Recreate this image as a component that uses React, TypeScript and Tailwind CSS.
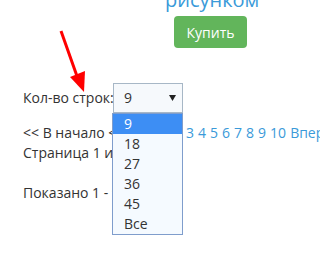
export default function App(): React.ReactElement {
	const options = ["9", "18", "27", "36", "45", "Все"]
	const pages = ["3", "4", "5", "6", "7", "8", "9", "10", "Вперёд", ">"]
	return (
		// Page crop
		<div className="relative w-[320px] h-[262px] overflow-hidden bg-white font-['Open_Sans',sans-serif] text-[14px] text-[#333]">
			{/* Product title tail */}
			<div className="-mt-[10px] ml-[165px] h-[20px] text-[20px] leading-[20px] text-[#3a9ad9]">
				рисунком
			</div>
			{/* Buy button */}
			<button className="block ml-[174px] mt-[6px] w-[73px] h-[32px] rounded bg-[#62b55b] text-white text-[14px]">
				Купить
			</button>
			{/* Rows selector */}
			<div className="mt-[35px] pl-[23px] flex items-center h-[30px]">
				<span className="shrink-0 w-[90px] whitespace-nowrap leading-[20px]">Кол-во строк:</span>
				<div className="relative shrink-0">
					<div className="w-[70px] h-[30px] border border-[#a7b7c6] bg-[#f6f9fc] flex items-center justify-between pl-[10px] pr-[6px]">
						<span className="leading-[20px]">9</span>
						<svg width="7" height="6" viewBox="0 0 7 6">
							<polygon points="0,0 7,0 3.5,6" fill="#222" />
						</svg>
					</div>
					{/* Open list */}
					<div className="absolute -left-px top-[30px] w-[71px] border border-[#7f9dcc] bg-[#f5faff] z-10">
						{options.map((o, i) => (
							<div
								key={o}
								className={
									i === 0
										? "h-[20px] leading-[20px] pl-[11px] bg-[#3d8ef4] text-white"
										: "h-[20px] leading-[20px] pl-[11px]"
								}
							>
								{o}
							</div>
						))}
					</div>
				</div>
			</div>
			{/* Pagination */}
			<div className="pl-[23px] mt-[10px] flex whitespace-nowrap leading-[20px]">
				<span className="shrink-0 w-[163px]">&lt;&lt; В начало &lt; 1 2</span>
				<div className="shrink-0 flex gap-[4px] text-[#3a9ad9]">
					{pages.map((p) => (
						<span key={p}>{p}</span>
					))}
				</div>
			</div>
			<div className="pl-[23px] whitespace-nowrap leading-[20px]">Страница 1 из 2</div>
			<div className="pl-[23px] mt-[20px] whitespace-nowrap leading-[20px]">Показано 1 - 9 из 15</div>
			{/* Red pointer arrow */}
			<svg className="absolute left-0 top-0" width="320" height="262">
				<line x1="61" y1="31" x2="78" y2="79" stroke="#ff0000" strokeWidth="3" />
				<polygon points="70,77 85,71 84,92" fill="#ff0000" />
			</svg>
		</div>
	)
}
